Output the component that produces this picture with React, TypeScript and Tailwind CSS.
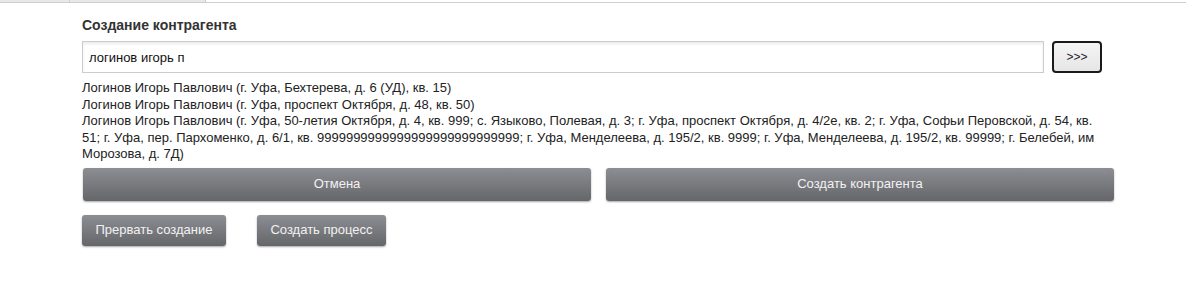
import React from "react";

const suggestions = [
  "Логинов Игорь Павлович (г. Уфа, Бехтерева, д. 6 (УД), кв. 15)",
  "Логинов Игорь Павлович (г. Уфа, проспект Октября, д. 48, кв. 50)",
  "Логинов Игорь Павлович (г. Уфа, 50-летия Октября, д. 4, кв. 999; с. Языково, Полевая, д. 3; г. Уфа, проспект Октября, д. 4/2е, кв. 2; г. Уфа, Софьи Перовской, д. 54, кв. 51; г. Уфа, пер. Пархоменко, д. 6/1, кв. 9999999999999999999999999999; г. Уфа, Менделеева, д. 195/2, кв. 9999; г. Уфа, Менделеева, д. 195/2, кв. 99999; г. Белебей, им Морозова, д. 7Д)",
];

const grayBtn =
  "rounded-[3px] bg-gradient-to-b from-[#8d8e93] to-[#65666a] text-[13px] text-[#f2f2f2] shadow-[0_1px_2px_rgba(0,0,0,0.35)]";

export default function App() {
  return (
    <div className="min-h-[297px] bg-white font-['Liberation_Sans',Arial,sans-serif] text-[#222]">
      {/* tab strip */}
      <div className="flex h-[3px] border-b border-[#cfcfcf]">
        <div className="w-[70px] border-r border-[#cfcfcf] bg-[#e8e8e8]" />
        <div className="w-[136px] border-r border-[#cfcfcf] bg-[#e8e8e8]" />
      </div>

      <div className="ml-[82px] w-[1032px] pt-[14px]">
        <h2 className="text-[14px] font-bold leading-[17px] text-[#333]">Создание контрагента</h2>

        <div className="mt-[7px] flex items-center gap-[8px]">
          <input
            className="h-[32px] w-[962px] border border-[#ccc] px-[6px] text-[13px] text-[#111] shadow-[inset_0_2px_3px_rgba(0,0,0,0.08)] outline-none"
            defaultValue="логинов игорь п"
          />
          <button className="h-[32px] w-[50px] rounded-[4px] border-2 border-[#1a1a1a] bg-gradient-to-b from-[#f4f4f4] to-[#e6e6e6] text-[12px] text-[#222]">
            &gt;&gt;&gt;
          </button>
        </div>

        <div className="mt-[7px] w-[1020px] text-[13px] leading-[16.5px]">
          {suggestions.map((s, i) => (
            <div key={i}>{s}</div>
          ))}
        </div>

        <div className="mt-[5px] grid grid-cols-2 gap-[15px] pl-px">
          <button className={`${grayBtn} h-[33px]`}>Отмена</button>
          <button className={`${grayBtn} h-[33px]`}>Создать контрагента</button>
        </div>

        <div className="mt-[14px] flex gap-[31px]">
          <button className={`${grayBtn} h-[31px] px-[13.5px]`}>Прервать создание</button>
          <button className={`${grayBtn} h-[31px] px-[13.5px]`}>Создать процесс</button>
        </div>
      </div>
    </div>
  );
}
